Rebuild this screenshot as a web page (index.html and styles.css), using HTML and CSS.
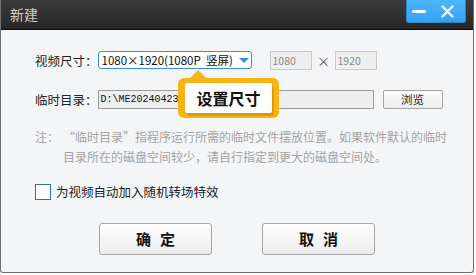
FILE: index.html
```html
<html>
    <head>
        <meta charset="utf-8">
        <link rel="stylesheet" href="styles.css">
    </head>
    <body>
        <div class="window">
            <div class="titlebar">
                <span class="title">新建</span>
                <div class="controls">
                    <span class="ctl-min"></span>
                    <svg class="ctl-close" width="13" height="13" viewBox="0 0 13 13">
                        <path d="M1.5 1.5 L11.5 11.5 M11.5 1.5 L1.5 11.5" stroke="#fff" stroke-width="2.2" stroke-linecap="round"/>
                    </svg>
                </div>
            </div>
            <div class="content">
                <div class="row row-size">
                    <span class="label">视频尺寸：</span>
                    <div class="select">
                        <span>1080×1920(1080P&nbsp;&nbsp;竖屏)</span>
                        <span class="caret"></span>
                    </div>
                    <span class="num">1080</span>
                    <span class="times">×</span>
                    <span class="num">1920</span>
                </div>
                <div class="row row-dir">
                    <span class="label">临时目录：</span>
                    <div class="path">D:\ME20240423</div>
                    <div class="browse">浏览</div>
                </div>
                <div class="note">
                    <span class="note-head">注：</span>
                    <span class="note-text">“临时目录”指程序运行所需的临时文件摆放位置。如果软件默认的临时目录所在的磁盘空间较少，请自行指定到更大的磁盘空间处。</span>
                </div>
                <label class="check">
                    <span class="box"></span>
                    <span>为视频自动加入随机转场特效</span>
                </label>
                <div class="actions">
                    <div class="btn">确定</div>
                    <div class="btn">取消</div>
                </div>
            </div>
            <div class="tip">
                <div class="tip-inner">设置尺寸</div>
            </div>
        </div>
    </body>
</html>
```

FILE: styles.css
```css
body {
    margin: 0;
    background: #ffffff;
    font-family: "Noto Sans CJK SC", "Noto Sans", sans-serif;
}

.window {
    position: relative;
    width: 472px;
    height: 272px;
    border: 1px solid #707070;
    border-top: none;
    border-radius: 0 0 3px 3px;
    background: #f4f5f7;
    overflow: hidden;
}

.titlebar {
    height: 29px;
    border-bottom: 1px solid #0a0a0a;
    background: linear-gradient(#3b3b3b, #262626);
    display: flex;
    align-items: flex-start;
    justify-content: space-between;
    margin: 0 -1px;
}

.title {
    color: #cfcfcf;
    font-size: 14px;
    line-height: 29px;
    padding-left: 10px;
}

.controls {
    width: 53px;
    height: 22px;
    margin-right: 8px;
    background: linear-gradient(#4db5fb, #35a2f2);
    border: 1px solid #2f86c8;
    border-top: none;
    border-radius: 0 0 3px 3px;
    display: flex;
    align-items: center;
    padding-left: 5px;
    gap: 15px;
}

.ctl-min {
    width: 14px;
    height: 3px;
    border-radius: 2px;
    background: #ffffff;
}

.content {
    padding-left: 34px;
    display: flex;
    flex-direction: column;
}

.row {
    display: flex;
    align-items: center;
}

.row-size {
    margin-top: 21px;
    height: 18px;
}

.row-dir {
    margin-top: 21px;
    height: 19px;
}

.label {
    flex: 0 0 62px;
    white-space: nowrap;
    font-size: 12.5px;
    color: #222;
}

.select {
    flex: 0 0 auto;
    width: 147px;
    height: 16px;
    border: 1px solid #3a8ed6;
    border-radius: 3px;
    background: #fff;
    display: flex;
    align-items: center;
    justify-content: space-between;
    padding: 0 2px 0 3px;
    font-size: 11.5px;
    white-space: nowrap;
    color: #111;
}

.caret {
    width: 0;
    height: 0;
    border-left: 5px solid transparent;
    border-right: 5px solid transparent;
    border-top: 5px solid #3a8ed6;
}

.num {
    flex: 0 0 auto;
    width: 38px;
    height: 17px;
    margin-left: 18px;
    border: 1px solid #c9c9c9;
    background: #efefef;
    color: #8a8a8a;
    font-size: 10.5px;
    line-height: 17px;
    padding-left: 2px;
}

.times {
    width: 22px;
    margin-left: 1px;
    text-align: center;
    color: #555;
    font-size: 13px;
}

.times + .num {
    margin-left: 0;
}

.path {
    flex: 0 0 auto;
    width: 272px;
    height: 17px;
    border: 1px solid #9c9c9c;
    background: #eeeeee;
    font-family: "Liberation Mono", monospace;
    font-size: 10px;
    line-height: 17px;
    padding-left: 2px;
    color: #111;
}

.browse {
    flex: 0 0 auto;
    width: 58px;
    height: 17px;
    margin-left: 9px;
    border: 1px solid #a3a3a3;
    border-radius: 2px;
    background: linear-gradient(#fdfdfd, #ececec);
    font-size: 11.5px;
    line-height: 17px;
    text-align: center;
    color: #222;
}

.note {
    margin-top: 18px;
    display: flex;
    font-size: 12px;
    line-height: 20px;
    color: #a4a4a4;
}

.note-head {
    flex: 0 0 28px;
}

.note-text {
    width: 392px;
}

.check {
    margin-top: 15px;
    display: flex;
    align-items: center;
    gap: 5px;
    font-size: 12.5px;
    color: #222;
}

.box {
    width: 14px;
    height: 14px;
    border: 1px solid #2d6fb5;
    background: #fff;
}

.actions {
    margin: 22px 0 0 -34px;
    display: flex;
    justify-content: center;
    gap: 50px;
}

.btn {
    width: 111px;
    height: 30px;
    border: 1px solid #a6a6a6;
    border-radius: 3px;
    background: linear-gradient(#fefefe, #ededed);
    font-size: 15px;
    font-weight: bold;
    line-height: 30px;
    text-align: center;
    letter-spacing: 9px;
    text-indent: 9px;
    color: #111;
}

/* orange callout pointing at the size dropdown */
.tip {
    position: absolute;
    left: 177px;
    top: 78px;
    padding: 5px 7px;
    background: #f6b415;
    border-radius: 6px;
}

.tip::before {
    content: '';
    position: absolute;
    left: 12px;
    top: -8px;
    border-left: 8px solid transparent;
    border-right: 8px solid transparent;
    border-bottom: 8px solid #f6b415;
}

.tip-inner {
    width: 87px;
    height: 30px;
    background: #fff;
    border-radius: 2px;
    box-shadow: 2px 3px 0 #d99a0c;
    font-size: 16px;
    font-weight: bold;
    line-height: 30px;
    text-align: center;
    color: #111;
}
```
